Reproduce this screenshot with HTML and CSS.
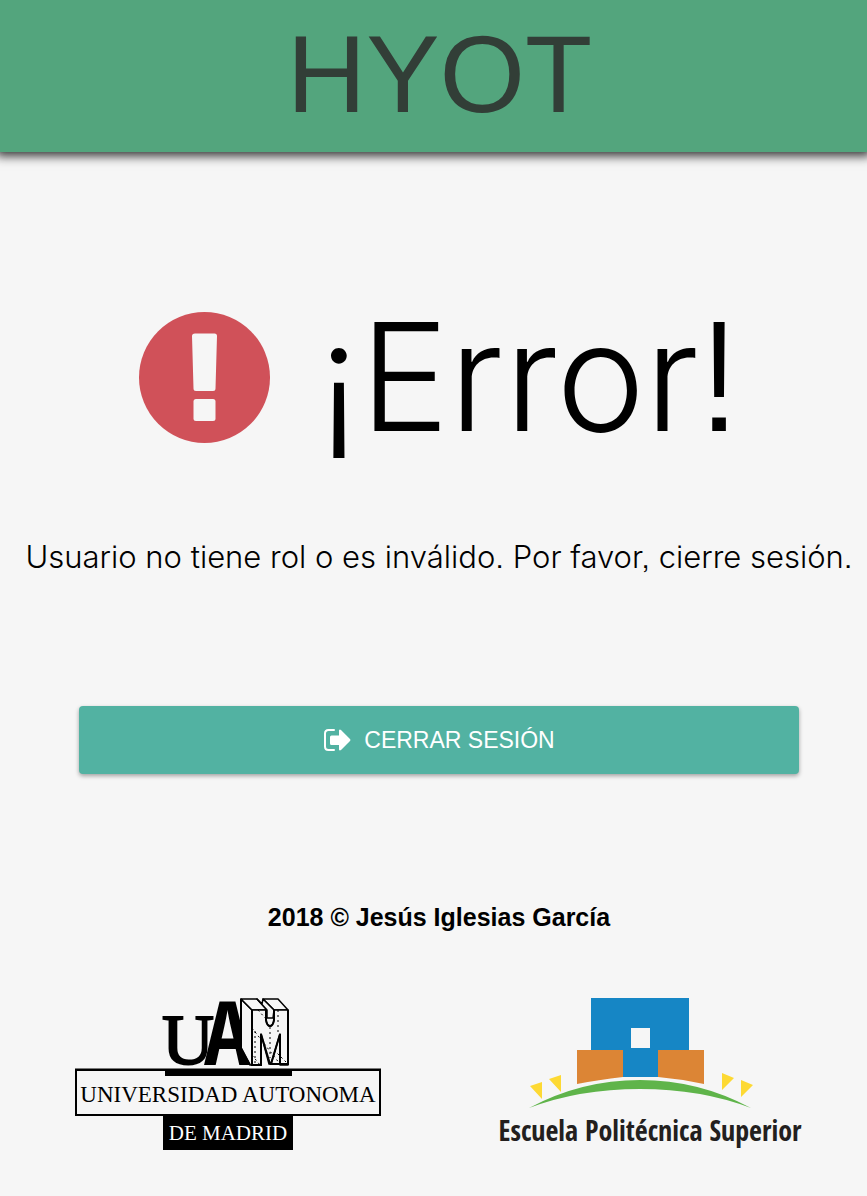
FILE: index.html
```
<!DOCTYPE html>
<html lang="es">
<head>
<meta charset="utf-8">
<meta name="viewport" content="width=device-width, initial-scale=1">
<title>HYOT - Error</title>
<link rel="stylesheet" href="styles.css">
</head>
<body>
<header class="topbar"><span class="brand">HYOT</span></header>
<main class="content">
  <h1 class="title">
    <svg class="title-icon" viewBox="0 0 131 131" aria-hidden="true">
      <circle cx="65.500" cy="65.500" r="65.500" fill="#d05159"/>
      <path fill="#f6f6f6" d="M56 21.500H75.500Q78 21.500 78 24L76.500 76.500Q76.500 79 74 79H57Q54.500 79 54.500 76.500L53 24Q53 21.500 56 21.500Z"/>
      <rect x="54.500" y="87" width="22" height="22" rx="2.500" fill="#f6f6f6"/>
    </svg>
    <span>¡Error!</span>
  </h1>
  <p class="message">Usuario no tiene rol o es inválido. Por favor, cierre sesión.</p>
  <button class="logout" type="button">
    <svg class="logout-icon" viewBox="0 0 28 24" aria-hidden="true">
      <path d="M11 2H5.500Q2 2 2 5.500V18.500Q2 22 5.500 22H11" fill="none" stroke="#fff" stroke-width="2" stroke-linecap="round"/>
      <path d="M8.500 7.500H16V2.500Q16.500 1 18 2L27 11Q28 12 27 13L18 22Q16.500 23 16 21.500V17H8.500Q7 17 7 15.500V9Q7 7.500 8.500 7.500Z" fill="#fff"/>
    </svg>
    <span>CERRAR SESIÓN</span>
  </button>
</main>
<footer class="footer">
  <p class="copyright">2018 © Jesús Iglesias García</p>
  <div class="logos">
    <svg class="logo" viewBox="0 0 306 152" role="img" aria-label="Universidad Autonoma de Madrid">
      <text class="mark-u" x="87" y="66">U</text>
      <text class="mark-a" x="129" y="67">A</text>
      <g stroke="#000" stroke-width="1.500" stroke-linejoin="round">
        <path fill="#f6f6f6" d="M166 1L177 12V67H175L166 50Z"/>
        <path fill="#f6f6f6" d="M166 1H182L192 12H177Z"/>
        <path fill="#f6f6f6" d="M188 1H203L213 12H199Z"/>
        <path fill="#f6f6f6" d="M182 1L192 12V20H198L199 12L188 1L187 6Z"/>
        <path fill="#f6f6f6" d="M177 12H191V22Q192 28 195 28T199 22V12H213V67H205V36L196 66H194L186 36V67H177Z"/>
      </g>
      <path d="M183 12L191 21M177 30L205 66M195 29V60M203 12V35M177 57L185 67M199 52L213 66M180 33V65" fill="none" stroke="#000" stroke-dasharray="2 3"/>
      <path d="M166 1V50L175 67M177 12V67H186V36M186 36L195 66M205 36L196 66H213M205 36V67M191 12V22Q192 28 195 28T199 22V12M213 12V67" fill="none" stroke="#000" stroke-width="2"/>
      <rect x="1" y="72" width="304" height="45" fill="none" stroke="#000" stroke-width="2"/>
      <path d="M0 70.500H306V73H217V78H90V73H0Z"/>
      <rect x="88" y="117" width="130" height="35"/>
      <text class="mark-name" x="153" y="104">UNIVERSIDAD AUTONOMA</text>
      <text class="mark-city" x="153" y="142">DE MADRID</text>
    </svg>
    <svg class="logo" viewBox="0 0 306 152" role="img" aria-label="Escuela Politécnica Superior">
      <path fill="#1686c5" fill-rule="evenodd" d="M94 0H192V53H161V79H126V53H94ZM134 30V50H153V30Z"/>
      <path fill="#dc8535" d="M80 52H126V79Q101 82 80 86ZM161 52H207V86Q184 81 161 79Z"/>
      <path fill="#5fb44a" d="M32 110Q84 82 143 82T254 110Q204 91 143 91T32 110Z"/>
      <path fill="#fdd933" d="M33 88L45 84V101ZM52 81L64 77V94ZM225 75L237 80L225 92ZM244 82L256 87L244 99Z"/>
      <text class="mark-school" x="153" y="143">Escuela Politécnica Superior</text>
    </svg>
  </div>
</footer>
</body>
</html>
```
FILE: styles.css
```
* { box-sizing: border-box; }

body {
  margin: 0;
  background: #f6f6f6;
  color: #000;
  font-family: "Liberation Sans", Arial, sans-serif;
}

.topbar {
  display: flex;
  justify-content: center;
  padding: 10px 0 14px 12px;
  background: #53a57d;
  box-shadow: 0 0 10px 4px #333;
}

.brand {
  color: #323e37;
  font-size: 110px;
  line-height: 128px;
}

.content,
.footer {
  display: flex;
  flex-direction: column;
  align-items: center;
  padding: 0 6px 0 17px;
}

.title {
  display: flex;
  align-items: center;
  gap: 48px;
  margin: 129px 0 0;
  font-family: Inter, sans-serif;
  font-feature-settings: "ss07";
  font-size: 150px;
  font-weight: 300;
  line-height: 192px;
}

.title-icon { width: 131px; }

.message {
  margin: 64px 0 0;
  font-family: Inter, sans-serif;
  font-feature-settings: "ss07";
  font-size: 31px;
  font-weight: 300;
  line-height: 40px;
  text-align: center;
}

.logout {
  display: flex;
  align-items: center;
  justify-content: center;
  gap: 13px;
  width: 100%;
  max-width: 720px;
  height: 68px;
  margin: 129px 0 0;
  border: 0;
  border-radius: 4px;
  background: #52b2a2;
  box-shadow: 0 2px 4px rgba(0, 0, 0, 0.35);
  color: #fff;
  font-family: inherit;
  font-size: 23px;
}

.logout-icon { width: 28px; }

.copyright {
  margin: 127px 0 0;
  font-size: 25px;
  font-weight: 700;
  line-height: 32px;
}

.logos {
  display: grid;
  grid-template-columns: 1fr 1fr;
  justify-items: center;
  width: 100%;
  margin: 65px 0 0;
  padding-bottom: 46px;
}

.logo { width: 306px; }

.mark-u {
  font-family: "Liberation Serif", serif;
  font-size: 72px;
  stroke: #000;
  stroke-width: 2px;
}

.mark-a {
  font-family: "Open Sans Condensed", "Liberation Sans", sans-serif;
  font-size: 88px;
  font-weight: 700;
}

.mark-name,
.mark-city {
  font-family: "Liberation Serif", serif;
  font-size: 23px;
  text-anchor: middle;
}

.mark-city {
  fill: #fff;
  font-size: 21px;
}

.mark-school {
  fill: #231f1e;
  font-family: "Open Sans Condensed", "Liberation Sans", sans-serif;
  font-size: 28px;
  text-anchor: middle;
}
```
